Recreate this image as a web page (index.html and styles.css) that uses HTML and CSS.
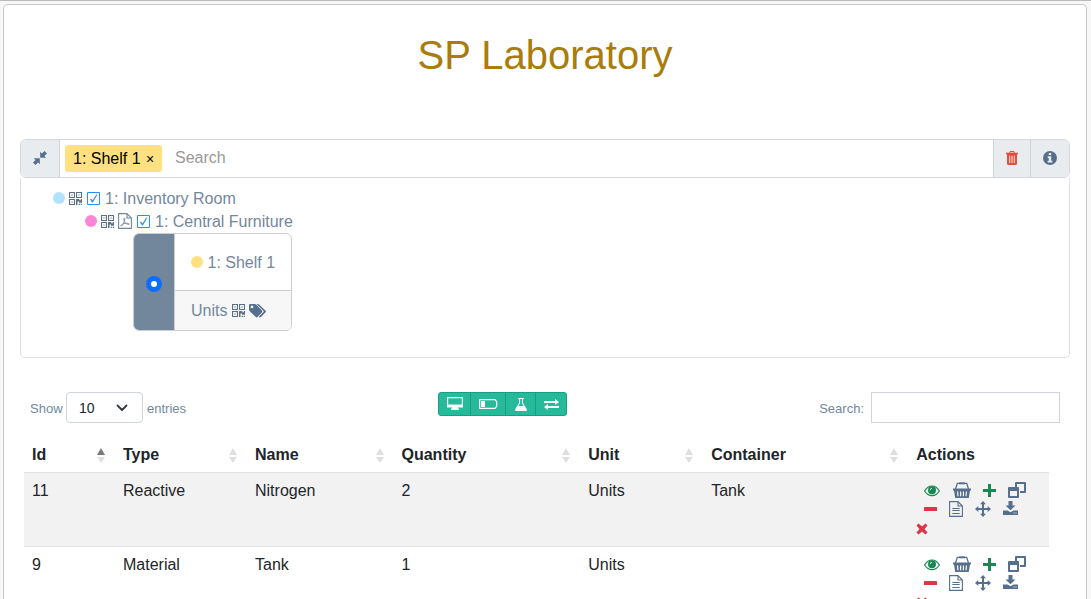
FILE: index.html
```
<!DOCTYPE html>
<html lang="en">
<head>
<meta charset="utf-8">
<title>SP Laboratory</title>
<link rel="stylesheet" href="styles.css">
</head>
<body>
<svg class="defs" aria-hidden="true">
  <symbol id="compress" viewBox="0 0 14 14"><path d="M7.200.800 9 2.600 11.600 0 14 2.400 11.400 5 13.200 6.800H7.200zM.800 7.200h6v6L5 11.400 2.400 14 0 11.600 2.600 9z"/></symbol>
  <symbol id="trash" viewBox="0 0 12 14"><path fill-rule="evenodd" d="M4 0h4l.8 1.800H12v1.500h-1V12.500Q11 14 9.500 14h-7Q1 14 1 12.500V3.300H0V1.800h3.200zM4.600 1 4.200 1.800h3.600L7.400 1zM3.200 4.800V12h1V4.800zm2.300 0V12h1V4.800zm2.300 0V12h1V4.800z"/></symbol>
  <symbol id="info" viewBox="0 0 14 14"><path fill-rule="evenodd" d="M7 0a7 7 0 1 0 0 14A7 7 0 0 0 7 0zM5.800 2h2.400v2H5.800zM4.700 5.200h3.500v4.600h1.200v1.700H4.700V9.800h1.100V6.900H4.700z"/></symbol>
  <symbol id="qr" viewBox="0 0 13 13"><path fill-rule="evenodd" d="M0 0h6v6H0zm1.100 1.100v3.800h3.800V1.100zM7 0h6v6H7zm1.100 1.100v3.800h3.800V1.100zM0 7h6v6H0zm1.100 1.100v3.800h3.800V8.100zM2.400 2.400h1.200v1.200H2.400zm7 0h1.200v1.200H9.400zm-7 7h1.200v1.200H2.400zM7 7h3.300v1.200h1.500V7H13v3.800h-3V9.600H8.500V13H7zm2.700 4.800H11V13H9.700zm2 0H13V13h-1.300z"/></symbol>
  <symbol id="pdf" viewBox="0 0 14 16"><path fill="none" stroke="currentColor" stroke-width="1.100" d="M.600.600h8.400l4.400 4.400v10.400H.600zM9 .600V5h4.400"/><path fill="none" stroke="currentColor" stroke-width=".9" d="M6.300 5c-.9 0-.5 2.300.3 4 .8 1.500 2.800 2.600 4.500 2.300.5-1.200-3-1.200-4.800-.8-1.800.4-3.700 1.600-3.400 2.600.9.500 2.500-2.300 3.300-4.300.5-1.300.7-3.800.1-3.800"/></symbol>
  <symbol id="check" viewBox="0 0 13 13"><path fill="none" stroke="currentColor" d="M.500.500h12v12H.500z"/><path d="m3 7.300 1-.8 1.500 2L9.300 2.500h1.200L5.800 10.500H5z"/></symbol>
  <symbol id="tags" viewBox="0 0 18 14"><path fill-rule="evenodd" d="M0 1.200Q0 0 1.200 0H5.500Q6.500 0 7.300.700L13 6.500Q13.800 7.300 13 8.200L8.500 13Q7.600 13.800 6.800 13L.800 7.200Q0 6.400 0 5.400zM3 1.600a1.300 1.300 0 1 0 0 2.700 1.300 1.300 0 0 0 0-2.700zM7.500 0h1.300q.9 0 1.600.700L16.600 6.700q.7.800 0 1.600L12 13q-.8.800-1.700.200l-.5-.5L14.600 7.800q.4-.4 0-.8z"/></symbol>
  <symbol id="desktop" viewBox="0 0 16 13"><path fill-rule="evenodd" d="M0 0h16v10.500h-5.500l.5 1H12V13H4v-1.500h1l.5-1H0zM1.200 1.200v6.300h13.600V1.200z"/></symbol>
  <symbol id="battery" viewBox="0 0 19 10"><path fill="none" stroke="currentColor" stroke-width="1.200" d="M.600.600h15.400l1.700 2v4.800l-1.700 2H.600z"/><path d="M2 2h4v6H2z"/></symbol>
  <symbol id="flask" viewBox="0 0 12 13"><path fill-rule="evenodd" d="M3.200 0h5.600v1.100H8V5l3.800 6.300Q12.400 13 10.800 13H1.200Q-.4 13 .200 11.300L4 5V1.100h-.8zM5.100 1.100v4.200L3.400 8h5.200L6.900 5.300V1.100z"/></symbol>
  <symbol id="exchange" viewBox="0 0 15 11"><path d="M0 2h11V0l4 3-4 3V4H0zM15 7v2H4v2L0 8l4-3v2z"/></symbol>
  <symbol id="eye" viewBox="0 0 16 12"><path fill="none" stroke="currentColor" stroke-width="1.200" d="M.600 6C4.500-.700 11.500-.700 15.400 6 11.500 12.200 4.500 12.200.600 6z"/><path fill-rule="evenodd" d="M8 1.300a4 4 0 1 0 0 8 4 4 0 0 0 0-8zM5.600 5.300Q5.700 3 8 2.900v.8Q6.500 3.800 6.400 5.300z"/></symbol>
  <symbol id="basket" viewBox="0 0 18 16"><path fill="none" stroke="currentColor" stroke-width="1.300" d="M2.500 7 4.300 1.300h2M15.500 7l-1.800-5.700h-2"/><path d="M6 .3h6v2H6z"/><path fill-rule="evenodd" d="M0 6.500h18v2h-1L15.800 16H2.200L1 8.500H0zM4 9.500l.4 4.800h1.200L5.200 9.500zm3 0v4.800h1.200V9.500zm2.800 0v4.800H11V9.500zm3 0-.4 4.800h1.200l.4-4.800z"/></symbol>
  <symbol id="plus" viewBox="0 0 13 13"><path d="M5 0h3v5h5v3H8v5H5V8H0V5h5z"/></symbol>
  <symbol id="windows" viewBox="0 0 18 16"><path fill-rule="evenodd" d="M8 0h9q1 0 1 1v9q0 1-1 1h-5V9h4V2H9v3H7V1q0-1 1-1zM1 5h9q1 0 1 1v9q0 1-1 1H1q-1 0-1-1V6q0-1 1-1zm1 4v5h7V9z"/></symbol>
  <symbol id="minus" viewBox="0 0 13 4"><rect width="13" height="4" rx=".6"/></symbol>
  <symbol id="file" viewBox="0 0 14 16"><path fill="none" stroke="currentColor" stroke-width="1.100" d="M.600.600h8.400l4.400 4.400v10.400H.600zM9 .600V5h4.400M3.300 7.500h7.400M3.300 9.500h7.400M3.300 12.500h7.400"/></symbol>
  <symbol id="move" viewBox="0 0 16 16"><path d="m8 0 3 3.300H9V7h3.700V5L16 8l-3.300 3V9H9v3.700h2L8 16l-3-3.300h2V9H3.300v2L0 8l3.300-3v2H7V3.300H5z"/></symbol>
  <symbol id="download" viewBox="0 0 15 14"><path fill-rule="evenodd" d="M5.500 0h4v4.500h3L7.500 9.300l-5-4.800h3zM0 9.500h4.500l3 1.800 3-1.800H15V14H0zm10.500 2v1h1v-1zm2 0v1h1v-1z"/></symbol>
  <symbol id="times" viewBox="0 0 12 12"><path d="M2.500.500 6 3.500 9.500.500l2 2L8.500 6l3 3.500-2 2L6 8.500l-3.500 3-2-2L3.500 6l-3-3.500z"/></symbol>
</svg>
<main class="card">
  <h1 class="title">SP Laboratory</h1>
  <div class="filter">
    <span class="addon addon-left"><svg class="i14"><use href="#compress"/></svg></span>
    <div class="tags"><span class="tag">1: Shelf 1 <b class="close">×</b></span><span class="placeholder">Search</span></div>
    <span class="addon danger"><svg class="trash"><use href="#trash"/></svg></span>
    <span class="addon addon-right"><svg class="i14"><use href="#info"/></svg></span>
  </div>
  <section class="tree">
    <div class="node"><i class="dot blue"></i><svg class="i13 qr"><use href="#qr"/></svg><svg class="i13 check"><use href="#check"/></svg><span>1: Inventory Room</span></div>
    <div class="node child"><i class="dot pink"></i><svg class="i13 qr"><use href="#qr"/></svg><svg class="page-icon pdf"><use href="#pdf"/></svg><svg class="i13 check"><use href="#check"/></svg><span>1: Central Furniture</span></div>
    <div class="shelf">
      <div class="shelf-pick"><i class="radio"></i></div>
      <div class="shelf-body">
        <div class="shelf-name"><i class="dot yellow"></i><span>1: Shelf 1</span></div>
        <div class="shelf-units"><span>Units</span><svg class="i13 qr"><use href="#qr"/></svg><svg class="tag-icon"><use href="#tags"/></svg></div>
      </div>
    </div>
  </section>
  <div class="toolbar">
    <div class="length">Show <span class="select">10<svg class="chevron" viewBox="0 0 12 8"><path d="m1.500 1.500 4.500 4.500 4.500-4.500"/></svg></span> entries</div>
    <div class="buttons">
      <span class="btn b1"><svg class="desktop"><use href="#desktop"/></svg></span><span class="btn b2"><svg class="battery"><use href="#battery"/></svg></span><span class="btn b3"><svg class="flask"><use href="#flask"/></svg></span><span class="btn b4"><svg class="exchange"><use href="#exchange"/></svg></span>
    </div>
    <div class="search">Search: <span class="search-box"></span></div>
  </div>
  <table class="grid">
    <colgroup><col class="c1"><col class="c2"><col class="c3"><col class="c4"><col class="c5"><col class="c6"><col class="c7"></colgroup>
    <thead><tr>
      <th><div class="head">Id<i class="sort asc"></i></div></th>
      <th><div class="head">Type<i class="sort"></i></div></th>
      <th><div class="head">Name<i class="sort"></i></div></th>
      <th><div class="head">Quantity<i class="sort"></i></div></th>
      <th><div class="head">Unit<i class="sort"></i></div></th>
      <th><div class="head">Container<i class="sort"></i></div></th>
      <th>Actions</th>
    </tr></thead>
    <tbody>
      <tr class="odd"><td>11</td><td>Reactive</td><td>Nitrogen</td><td>2</td><td>Units</td><td>Tank</td><td>
        <div class="actions">
          <div class="line first"><svg class="eye"><use href="#eye"/></svg><svg class="basket"><use href="#basket"/></svg><svg class="plus"><use href="#plus"/></svg><svg class="windows"><use href="#windows"/></svg></div>
          <div class="line second"><svg class="minus"><use href="#minus"/></svg><svg class="page-icon file"><use href="#file"/></svg><svg class="move"><use href="#move"/></svg><svg class="download"><use href="#download"/></svg></div>
          <div class="line third"><svg class="times"><use href="#times"/></svg></div>
        </div></td></tr>
      <tr><td>9</td><td>Material</td><td>Tank</td><td>1</td><td>Units</td><td></td><td>
        <div class="actions">
          <div class="line first"><svg class="eye"><use href="#eye"/></svg><svg class="basket"><use href="#basket"/></svg><svg class="plus"><use href="#plus"/></svg><svg class="windows"><use href="#windows"/></svg></div>
          <div class="line second"><svg class="minus"><use href="#minus"/></svg><svg class="page-icon file"><use href="#file"/></svg><svg class="move"><use href="#move"/></svg><svg class="download"><use href="#download"/></svg></div>
          <div class="line third"><svg class="times"><use href="#times"/></svg></div>
        </div></td></tr>
    </tbody>
  </table>
</main>
</body>
</html>
```
FILE: styles.css
```
* { box-sizing: border-box; }
html, body { height: 100%; }
body {
  margin: 0;
  padding: 3px 4px 0 3px;
  border-top: 1px solid #bbb9ba;
  background: #f7f7f7;
  overflow: hidden;
  font: 16px/24px "Liberation Sans", Arial, sans-serif;
  color: #73879c;
}
svg { display: block; flex: none; fill: currentColor; }
.defs { display: none; }
.card {
  height: 100%;
  padding: 0 16px;
  border: 1px solid #c9c9c9;
  border-bottom: 0;
  border-radius: 5px 5px 0 0;
  background: #fff;
  overflow: hidden;
}
.title {
  margin: 26px 0 60px;
  font-size: 40px;
  font-weight: 400;
  line-height: 48px;
  text-align: center;
  color: #a97c0b;
}
.i14 { width: 14px; height: 14px; }
.i13 { width: 13px; height: 13px; }
.page-icon { width: 14px; height: 16px; }

.filter {
  display: flex;
  height: 39px;
  border: 1px solid #d5d8dc;
  border-radius: 6px;
  overflow: hidden;
}
.addon {
  display: flex;
  align-items: center;
  justify-content: center;
  width: 38px;
  padding-bottom: 1px;
  background: #e9ecef;
  border-left: 1px solid #ced4da;
  color: #566f8c;
}
.addon-left { width: 39px; border-left: 0; border-right: 1px solid #ced4da; }
.addon-right { width: 39px; }
.danger { width: 37px; color: #e74c3c; }
.trash { width: 12px; height: 14px; }
.tags { display: flex; flex: 1; align-items: center; padding-left: 5px; }
.tag {
  width: 97px;
  height: 27px;
  padding: 0 0 0 8px;
  border-radius: 3px;
  background: #ffe082;
  color: #000;
  line-height: 27px;
}
.close { font-size: 14px; font-weight: 400; margin-left: 1px; }
.placeholder { margin-left: 13px; color: #999; line-height: 24px; padding-bottom: 2px; }

.tree {
  height: 180px;
  padding: 9px 32px 0;
  border: 1px solid #dfe1e4;
  border-top: 0;
  border-radius: 0 0 5px 5px;
}
.node { display: flex; align-items: center; height: 23px; }
.node svg, .node .dot { margin-bottom: 1px; }
.child { padding-left: 32px; }
.dot { width: 12px; height: 12px; flex: none; border-radius: 50%; }
.blue { background: #b3e2ff; }
.pink { background: #ff86d5; }
.yellow { background: #ffe07e; }
.qr { margin-left: 4px; color: #5c7085; }
.check { margin: 0 5px; color: #2492f5; }
.pdf { margin-left: 4px; color: #73879c; }
.shelf {
  display: flex;
  width: 159px;
  height: 98px;
  margin: 0 0 0 80px;
  border: 1px solid #cbcdcf;
  border-radius: 6px;
  overflow: hidden;
}
.shelf-pick {
  display: flex;
  align-items: center;
  justify-content: center;
  width: 41px;
  padding-top: 4px;
  background: #73879c;
  border-right: 1px solid #cbcdcf;
}
.radio { width: 16px; height: 16px; border: 5px solid #0d6efd; border-radius: 50%; background: #fff; }
.shelf-body { flex: 1; }
.shelf-name { display: flex; align-items: center; gap: 4.500px; height: 57px; padding: 1px 0 0 16px; border-bottom: 1px solid #cbcdcf; }
.shelf-name .dot { margin-bottom: 1px; }
.shelf-units { display: flex; align-items: center; height: 39px; padding-left: 16px; background: #f7f7f7; }
.shelf-units .qr { margin-left: 4.500px; margin-bottom: 1px; }
.tag-icon { width: 18px; height: 14px; margin-left: 4px; color: #566f8c; }

.toolbar { display: flex; margin: 34px 10px 0; font-size: 13px; line-height: 31px; }
.length, .search { display: flex; padding-top: 1px; line-height: 31px; }
.length { width: 408px; }
.select {
  display: flex;
  align-items: center;
  justify-content: space-between;
  width: 77px;
  height: 31px;
  margin: -1px 4.500px 0 3px;
  padding: 1px 14px 0 12.500px;
  border: 1px solid #ced4da;
  border-radius: 4px;
  font-size: 14px;
  color: #212529;
}
.chevron { width: 12px; height: 8px; fill: none; stroke: #343a40; stroke-width: 1.800; stroke-linecap: round; stroke-linejoin: round; }
.buttons { display: flex; height: 24px; border: 1px solid #169f85; border-radius: 3px; background: #26b99a; color: #fff; }
.btn { display: flex; align-items: center; justify-content: center; border-left: 1px solid #169f85; }
.b1 { width: 31px; border-left: 0; padding-bottom: 1px; }
.b2 { width: 35px; }
.b3 { width: 30px; }
.b4 { width: 31px; }
.desktop { width: 16px; height: 13px; }
.battery { width: 19px; height: 10px; }
.flask { width: 12px; height: 13px; }
.exchange { width: 15px; height: 11px; }
.search { margin-left: auto; }
.search-box { width: 189px; height: 31px; margin: -1px 0 0 7px; border: 1px solid #ced4da; }

.grid { width: 1025px; margin: 13px 0 0 4px; table-layout: fixed; border-collapse: separate; border-spacing: 0; color: #212529; }
.c1 { width: 91px; } .c2 { width: 132px; } .c3 { width: 146.500px; } .c4 { width: 186.700px; }
.c5 { width: 123px; } .c6 { width: 205px; } .c7 { width: 140.800px; }
.grid th { height: 36px; padding: 6px 8px 5px; font-weight: 700; text-align: left; border-bottom: 1px solid #dee2e6; }
.head { display: flex; align-items: center; justify-content: space-between; }
.sort { display: grid; gap: 2px; margin: 1px 2px 0 0; }
th .sort::before, th .sort::after { content: ""; border: 4px solid transparent; }
.sort::before { border-top-width: 0 !important; border-bottom: 7px solid #dedfe0 !important; }
.sort::after { border-bottom-width: 0 !important; border-top: 6px solid #dedfe0 !important; }
.asc::before { border-bottom-color: #77797c !important; }
.grid td { height: 74px; padding: 6px 8px 0; vertical-align: top; border-bottom: 1px solid #dee2e6; }
.odd { background: #f2f2f2; }

.actions { color: #566f8c; padding-top: 3px; height: 60px; }
.line { display: flex; align-items: center; }
.first { height: 17px; padding-left: 7.800px; }
.second { height: 20px; padding-left: 7.800px; }
.third { height: 20px; }
.eye { width: 16px; height: 12px; color: #198754; }
.basket { width: 18px; height: 16px; margin: 0 0 1px 13px; }
.plus { width: 13px; height: 13px; margin: 0 0 1px 12px; color: #198754; }
.windows { width: 18px; height: 16px; margin: 0 0 1px 12px; }
.minus { width: 13px; height: 4px; color: #dc3545; }
.file { margin-left: 12px; }
.move { width: 16px; height: 16px; margin-left: 12.500px; }
.download { width: 15px; height: 14px; margin: 0 0 2px 12px; }
.times { width: 12px; height: 12px; color: #dc3545; }
```
